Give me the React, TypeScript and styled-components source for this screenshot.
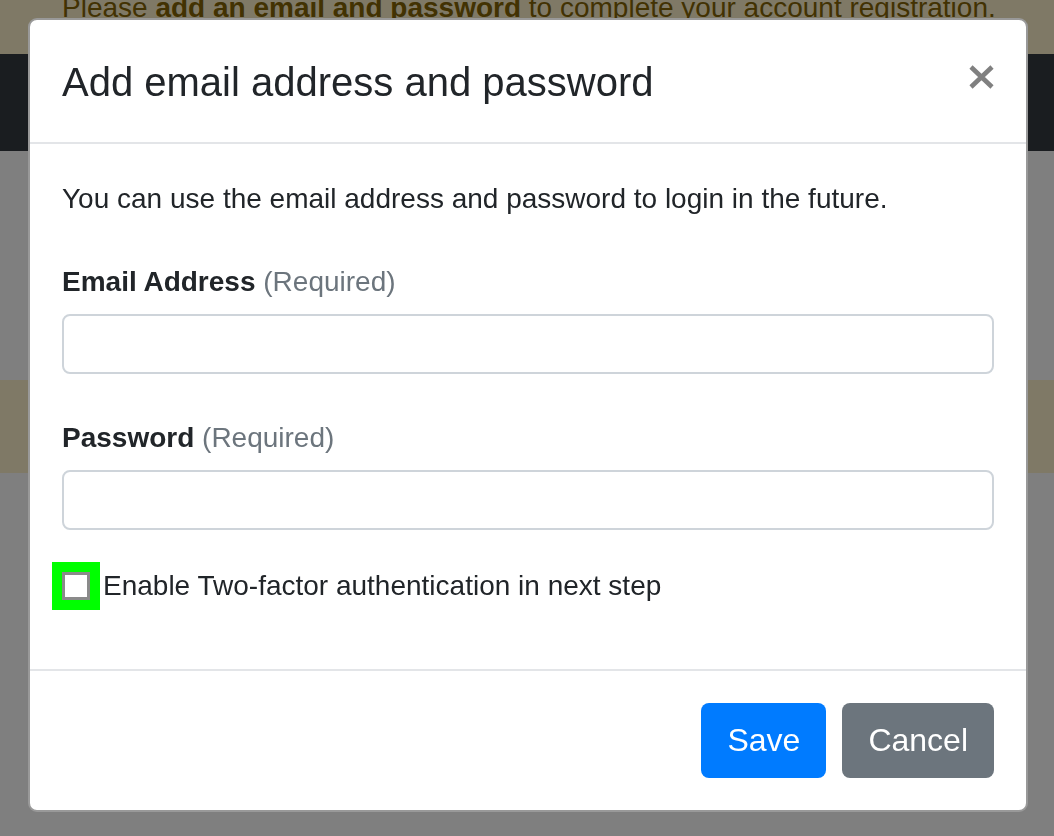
import React from "react";
import styled, { createGlobalStyle } from "styled-components";

const Global = createGlobalStyle`
  html, body { margin: 0; padding: 0; background: #ffffff; }
  body {
    font-family: "Liberation Sans", Arial, sans-serif;
    color: #212529;
    overflow: hidden;
    height: 836px;
  }
  * { box-sizing: border-box; }
`;

const Page = styled.div`
  margin-top: -25px;
  display: flex;
  flex-direction: column;
`;

const TopAlert = styled.div`
  background: #fff3cd;
  color: #856404;
  font-size: 28px;
  line-height: 42px;
  padding: 12px 62px 25px;
  white-space: nowrap;
`;

const NavBar = styled.div`
  background: #343a40;
  height: 97px;
`;

const Spacer = styled.div<{ $h: number }>`
  height: ${(p) => p.$h}px;
`;

const Band = styled.div`
  background: #fff3cd;
  height: 93px;
`;

const Backdrop = styled.div`
  position: fixed;
  inset: 0;
  background: rgba(0, 0, 0, 0.5);
  padding: 18px 0 0 28px;
`;

const Dialog = styled.div`
  width: 1000px;
  background: #ffffff;
  border: 2px solid rgba(0, 0, 0, 0.4);
  border-radius: 9px;
  display: flex;
  flex-direction: column;
`;

const Header = styled.div`
  display: flex;
  align-items: flex-start;
  justify-content: space-between;
  padding: 32px 32px 30px 32px;
  border-bottom: 2px solid #e3e5e8;
`;

const Title = styled.h4`
  margin: 0;
  font-size: 40px;
  line-height: 60px;
  font-weight: 400;
  color: #212529;
`;

const CloseButton = styled.button`
  border: 0;
  background: transparent;
  padding: 0;
  margin: 12px 0 0 0;
  width: 26px;
  height: 26px;
  display: flex;
  align-items: center;
  justify-content: center;
  cursor: pointer;
`;

const Body = styled.div`
  padding: 34px 32px 62px 32px;
  display: flex;
  flex-direction: column;
`;

const Intro = styled.p`
  margin: 0 0 41px 0;
  font-size: 28px;
  line-height: 42px;
`;

const FormGroup = styled.div<{ $mb: number }>`
  display: flex;
  flex-direction: column;
  margin-bottom: ${(p) => p.$mb}px;
`;

const Label = styled.label`
  font-size: 28px;
  line-height: 42px;
  font-weight: 700;
  margin-bottom: 11px;
`;

const Muted = styled.span`
  font-weight: 400;
  color: #6c757d;
`;

const Input = styled.input`
  height: 60px;
  width: 100%;
  border: 2px solid #ced4da;
  border-radius: 8px;
  font-size: 28px;
  padding: 0 20px;
  font-family: inherit;
  outline: none;
`;

const CheckRow = styled.label`
  display: flex;
  align-items: center;
  font-size: 28px;
  line-height: 42px;
`;

const CheckBox = styled.span`
  width: 28px;
  height: 28px;
  margin: 0 13px 0 0;
  border: 3px solid #8a8a8a;
  border-radius: 0;
  background: #ffffff;
  outline: 10px solid #00ff00;
  flex: none;
`;

const Footer = styled.div`
  display: flex;
  justify-content: flex-end;
  gap: 16px;
  padding: 32px 32px 32px 32px;
  border-top: 2px solid #e3e5e8;
`;

const Button = styled.button<{ $variant: "primary" | "secondary" }>`
  font-family: "Liberation Sans", Arial, sans-serif;
  font-size: 32px;
  line-height: 49px;
  padding: 13px 26px;
  border: 0;
  border-radius: 8px;
  color: #ffffff;
  background: ${(p) => (p.$variant === "primary" ? "#007bff" : "#6c757d")};
  cursor: pointer;
`;

export default function App() {
  return (
    <>
      <Global />
      <Page>
        <TopAlert>
          Please <b>add an email and password</b> to complete your account registration.
        </TopAlert>
        <NavBar />
        <Spacer $h={229} />
        <Band />
        <Spacer $h={400} />
      </Page>
      <Backdrop>
        <Dialog>
          <Header>
            <Title>Add email address and password</Title>
            <CloseButton aria-label="Close">
              <svg width="25" height="24" viewBox="0 0 25 24">
                <path d="M2 2 L23 22 M23 2 L2 22" stroke="#808080" strokeWidth="4.6" fill="none" />
              </svg>
            </CloseButton>
          </Header>
          <Body>
            <Intro>You can use the email address and password to login in the future.</Intro>
            <FormGroup $mb={43}>
              <Label>
                Email Address <Muted>(Required)</Muted>
              </Label>
              <Input type="email" />
            </FormGroup>
            <FormGroup $mb={35}>
              <Label>
                Password <Muted>(Required)</Muted>
              </Label>
              <Input type="password" />
            </FormGroup>
            <CheckRow>
              <CheckBox />
              Enable Two-factor authentication in next step
            </CheckRow>
          </Body>
          <Footer>
            <Button $variant="primary">Save</Button>
            <Button $variant="secondary">Cancel</Button>
          </Footer>
        </Dialog>
      </Backdrop>
    </>
  );
}
